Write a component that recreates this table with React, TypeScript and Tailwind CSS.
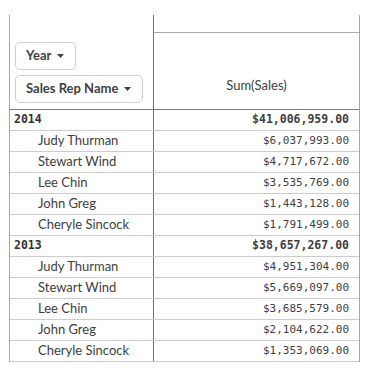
import React from "react";

interface RepRow {
  name: string;
  sales: string;
}

interface YearGroup {
  year: string;
  total: string;
  reps: RepRow[];
}

const groups: YearGroup[] = [
  {
    year: "2014",
    total: "$41,006,959.00",
    reps: [
      { name: "Judy Thurman", sales: "$6,037,993.00" },
      { name: "Stewart Wind", sales: "$4,717,672.00" },
      { name: "Lee Chin", sales: "$3,535,769.00" },
      { name: "John Greg", sales: "$1,443,128.00" },
      { name: "Cheryle Sincock", sales: "$1,791,499.00" },
    ],
  },
  {
    year: "2013",
    total: "$38,657,267.00",
    reps: [
      { name: "Judy Thurman", sales: "$4,951,304.00" },
      { name: "Stewart Wind", sales: "$5,669,097.00" },
      { name: "Lee Chin", sales: "$3,685,579.00" },
      { name: "John Greg", sales: "$2,104,622.00" },
      { name: "Cheryle Sincock", sales: "$1,353,069.00" },
    ],
  },
];

const sans = "font-['Lato','Open_Sans',sans-serif]";
const mono = "font-['DejaVu_Sans_Mono',monospace]";

const Caret = () => (
  <svg width="7" height="4" viewBox="0 0 7 4" className="ml-[6px]">
    <path d="M0 0h7L3.5 4z" fill="#404040" />
  </svg>
);

const FieldButton = ({ label }: { label: string }) => (
  <div
    className={`flex h-[28px] w-fit items-center rounded-[5px] border border-[#cfcfcf] bg-white pl-[10px] pr-[11px] text-[13px] font-bold text-[#404040] ${sans}`}
  >
    <span>{label}</span>
    <Caret />
  </div>
);

const Row = ({ left, right, bold }: { left: string; right: string; bold?: boolean }) => (
  <div className="flex h-[21px] border-b border-[#cccccc]">
    <div
      className={
        bold
          ? `flex w-[143px] items-center pl-[4px] text-[11.5px] font-bold text-[#333] ${mono}`
          : `flex w-[143px] items-center pl-[28px] text-[13px] text-[#404040] ${sans}`
      }
    >
      {left}
    </div>
    <div
      className={`flex flex-1 items-center justify-end border-l border-[#6e6e6e] pr-[10px] text-[#404040] ${mono} ${
        bold ? "text-[11.5px] font-bold text-[#333]" : "text-[11px]"
      }`}
    >
      {right}
    </div>
  </div>
);

export default function App() {
  return (
    <div className="h-[372px] w-[369px] bg-white pt-[15px]">
      <div className="ml-[9px] w-[351px] border-x border-[#a6a6a6]">
        <div className="flex h-[95px] border-b border-[#7a7a7a]">
          <div className="flex w-[143px] flex-col justify-end gap-[5px] pb-[6px] pl-[5px]">
            <FieldButton label="Year" />
            <FieldButton label="Sales Rep Name" />
          </div>
          <div className="flex flex-1 flex-col border-l border-[#6e6e6e]">
            <div className="h-[18px] border-b border-[#aaaaaa]" />
            <div
              className={`flex flex-1 items-end justify-center pb-[14px] text-[13px] text-[#404040] ${sans}`}
            >
              Sum(Sales)
            </div>
          </div>
        </div>
        {groups.map((g) => (
          <React.Fragment key={g.year}>
            <Row left={g.year} right={g.total} bold />
            {g.reps.map((r) => (
              <Row key={g.year + r.name} left={r.name} right={r.sales} />
            ))}
          </React.Fragment>
        ))}
      </div>
    </div>
  );
}
